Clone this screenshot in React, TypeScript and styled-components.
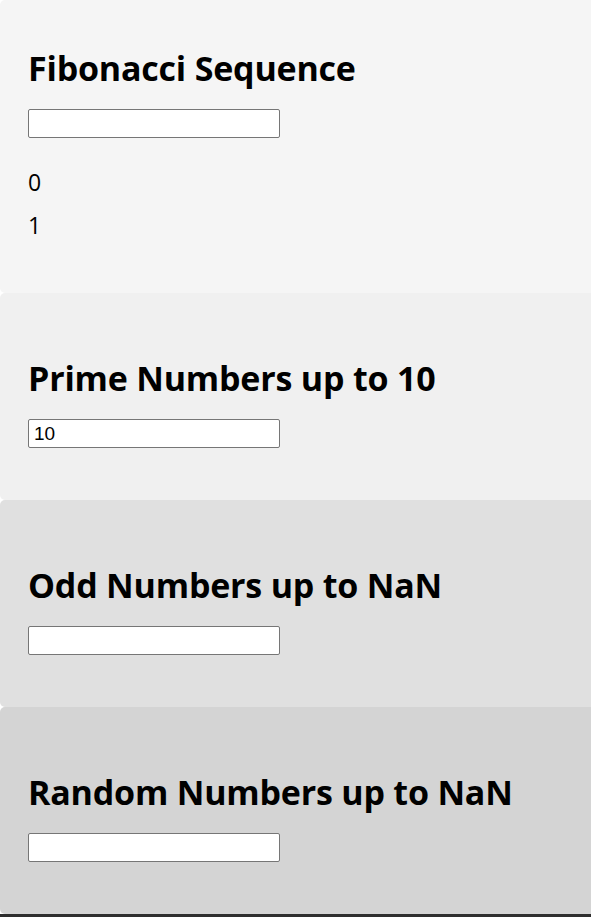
import React, { useState } from 'react'
import styled, { createGlobalStyle } from 'styled-components'

const GlobalStyle = createGlobalStyle`
  html, body {
    margin: 0;
    padding: 0;
    background: #ffffff;
  }
  body {
    font-family: "Open Sans", "Noto Sans", sans-serif;
    color: #000;
  }
`

const Section = styled.section<{ $bg: string; $first?: boolean }>`
  background: ${({ $bg }) => $bg};
  border-radius: 5px 0 0 5px;
  padding: ${({ $first }) => ($first ? '47px 28px 53px' : '64px 28px 52px')};
`

const Title = styled.h2`
  margin: 0 0 20px;
  font-size: 34px;
  line-height: 42px;
  letter-spacing: -0.2px;
  font-weight: 700;
`

const NumberInput = styled.input`
  display: block;
  box-sizing: border-box;
  width: 252px;
  height: 29px;
  margin: 0;
  padding: 1px 5px;
  border: 1px solid #767676;
  border-radius: 2px;
  background: #fff;
  font-family: "Liberation Sans", Arial, sans-serif;
  font-size: 19px;
  color: #000;
  outline: none;
`

const List = styled.ul`
  margin: 32px 0 3px;
  padding: 0;
  list-style: none;
  display: flex;
  flex-direction: column;
  gap: 19px;
`

const Item = styled.li`
  font-size: 23px;
  line-height: 24px;
  font-weight: 400;
`

const Strip = styled.div`
  height: 3px;
  background: #2e2e2e;
`

const fibonacci = (n: number) => {
  const seq = [0, 1]
  while (seq.length < n) seq.push(seq[seq.length - 1] + seq[seq.length - 2])
  return seq.slice(0, Math.max(n, 2))
}

export default function App() {
  const [fibCount, setFibCount] = useState('')
  const [primeLimit, setPrimeLimit] = useState('10')
  const [oddLimit, setOddLimit] = useState('')
  const [randomLimit, setRandomLimit] = useState('')

  const fib = fibonacci(parseInt(fibCount, 10) || 2)

  return (
    <>
      <GlobalStyle />
      <Section $bg="#f5f5f5" $first>
        <Title>Fibonacci Sequence</Title>
        <NumberInput type="text" value={fibCount} onChange={(e) => setFibCount(e.target.value)} />
        <List>
          {fib.map((n, i) => (
            <Item key={i}>{n}</Item>
          ))}
        </List>
      </Section>
      <Section $bg="#f0f0f0">
        <Title>Prime Numbers up to {parseInt(primeLimit, 10)}</Title>
        <NumberInput type="text" value={primeLimit} onChange={(e) => setPrimeLimit(e.target.value)} />
      </Section>
      <Section $bg="#e0e0e0">
        <Title>Odd Numbers up to {parseInt(oddLimit, 10)}</Title>
        <NumberInput type="text" value={oddLimit} onChange={(e) => setOddLimit(e.target.value)} />
      </Section>
      <Section $bg="#d4d4d4">
        <Title>Random Numbers up to {parseInt(randomLimit, 10)}</Title>
        <NumberInput type="text" value={randomLimit} onChange={(e) => setRandomLimit(e.target.value)} />
      </Section>
      <Strip />
    </>
  )
}
